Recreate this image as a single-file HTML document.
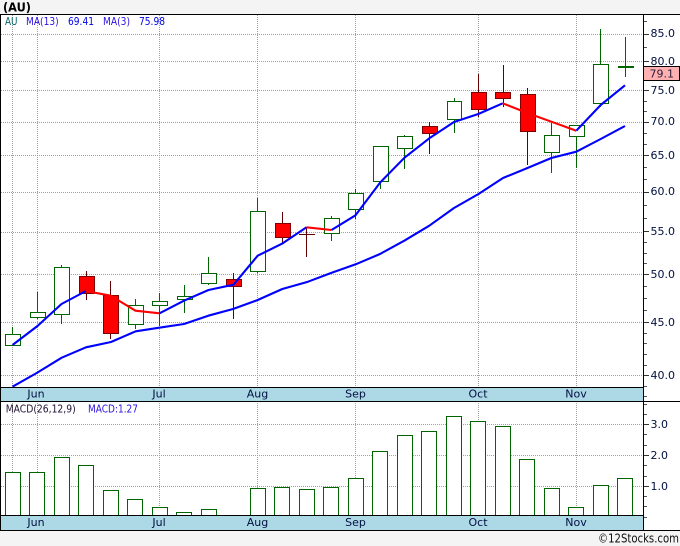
<!DOCTYPE html>
<html><head><meta charset="utf-8"><style>
html,body{margin:0;padding:0;background:#f4f4f4;width:680px;height:546px;overflow:hidden}
svg{display:block}
text{font-family:"DejaVu Sans","Liberation Sans",sans-serif;font-size:11px;fill:#001040}
.l{font-size:10.5px}
.c{shape-rendering:crispEdges}
</style></head><body>
<svg width="680" height="546" viewBox="0 0 680 546">
<rect x="0" y="0" width="680" height="546" fill="#f4f4f4"/>
<rect x="0" y="14" width="680" height="516" fill="#fff"/>
<text x="3" y="11.5" textLength="28" lengthAdjust="spacingAndGlyphs" style="font-weight:bold;font-size:12.5px;fill:#000">(AU)</text>
<rect x="1" y="387" width="642" height="14" fill="#add8e6"/>
<rect x="1" y="515" width="642" height="15" fill="#add8e6"/>
<g class="c" stroke="#a0a0a0" stroke-dasharray="1 1" fill="none">
<path d="M1 34.5H643M1 61.5H643M1 90.5H643M1 122.5H643M1 155.5H643M1 192.5H643M1 232.5H643M1 274.5H643M1 322.5H643M1 375.5H643M1 424.5H643M1 455.5H643M1 486.5H643"/>
<path d="M12.5 15V530M37.5 15V530M159.5 15V530M257.5 15V530M355.5 15V530M478.5 15V530M576.5 15V530"/>
</g>
<rect x="1" y="387" width="642" height="14" fill="#add8e6"/>
<rect x="1" y="515" width="642" height="15" fill="#add8e6"/>
<g class="c">
<path fill="none" stroke="#006400" d="M12.5 327V335M37.5 292V313M37.5 317V319M61.5 265V268M61.5 314V324M135.5 299V306M135.5 324V329M159.5 293V302M159.5 305V326M184.5 285V297M184.5 299V313M208.5 257V274M208.5 283V285M257.5 198V212M257.5 271V273M331.5 216V219M331.5 233V241M355.5 189V194M355.5 209V219M380.5 181V189M404.5 135V137M404.5 148V169M454.5 98V102M454.5 119V133M551.5 123V136M551.5 152V173M576.5 125V126M576.5 136V168M600.5 29V65M600.5 103V107M625.5 37V77"/>
<path fill="none" stroke="#600000" d="M86.5 271V277M86.5 293V300M110.5 281V296M110.5 333V339M233.5 273V280M233.5 286V319M282.5 212V224M282.5 237V244M306.5 228V257M429.5 122V127M429.5 133V154M478.5 74V93M478.5 109V117M503.5 65V93M503.5 98V107M527.5 88V95M527.5 131V165"/>
<path fill="none" stroke="#600000" d="M299 234.5H315"/>
<path fill="none" stroke="#006400" stroke-width="2" d="M618 67H634"/>
<g fill="#fff" stroke="#006400">
<rect x="5.5" y="334.5" width="15" height="11"/>
<rect x="30.5" y="312.5" width="15" height="5"/>
<rect x="54.5" y="267.5" width="15" height="47"/>
<rect x="128.5" y="305.5" width="15" height="19"/>
<rect x="152.5" y="301.5" width="15" height="4"/>
<rect x="177.5" y="296.5" width="15" height="3"/>
<rect x="201.5" y="273.5" width="15" height="10"/>
<rect x="250.5" y="211.5" width="15" height="60"/>
<rect x="324.5" y="218.5" width="15" height="15"/>
<rect x="348.5" y="193.5" width="15" height="16"/>
<rect x="373.5" y="146.5" width="15" height="35"/>
<rect x="397.5" y="136.5" width="15" height="12"/>
<rect x="447.5" y="101.5" width="14" height="18"/>
<rect x="544.5" y="135.5" width="15" height="17"/>
<rect x="569.5" y="125.5" width="15" height="11"/>
<rect x="593.5" y="64.5" width="15" height="39"/>
</g>
<g fill="#ff0000" stroke="#800000">
<rect x="79.5" y="276.5" width="15" height="17"/>
<rect x="103.5" y="295.5" width="15" height="38"/>
<rect x="226.5" y="279.5" width="15" height="7"/>
<rect x="275.5" y="223.5" width="15" height="14"/>
<rect x="422.5" y="126.5" width="15" height="7"/>
<rect x="471.5" y="92.5" width="15" height="17"/>
<rect x="495.5" y="92.5" width="15" height="6"/>
<rect x="520.5" y="94.5" width="15" height="37"/>
</g>
<g fill="#fff" stroke="#006400">
<rect x="5.5" y="472.5" width="15" height="43"/>
<rect x="29.5" y="472.5" width="15" height="43"/>
<rect x="54.5" y="457.5" width="15" height="58"/>
<rect x="78.5" y="465.5" width="15" height="50"/>
<rect x="103.5" y="490.5" width="15" height="25"/>
<rect x="127.5" y="499.5" width="15" height="16"/>
<rect x="152.5" y="507.5" width="15" height="8"/>
<rect x="176.5" y="512.5" width="15" height="3"/>
<rect x="201.5" y="509.5" width="15" height="6"/>
<rect x="250.5" y="488.5" width="15" height="27"/>
<rect x="274.5" y="487.5" width="15" height="28"/>
<rect x="299.5" y="489.5" width="15" height="26"/>
<rect x="323.5" y="487.5" width="15" height="28"/>
<rect x="348.5" y="478.5" width="15" height="37"/>
<rect x="372.5" y="451.5" width="15" height="64"/>
<rect x="397.5" y="435.5" width="15" height="80"/>
<rect x="421.5" y="431.5" width="15" height="84"/>
<rect x="446.5" y="416.5" width="15" height="99"/>
<rect x="470.5" y="421.5" width="15" height="94"/>
<rect x="495.5" y="426.5" width="15" height="89"/>
<rect x="519.5" y="459.5" width="15" height="56"/>
<rect x="544.5" y="488.5" width="15" height="27"/>
<rect x="568.5" y="507.5" width="15" height="8"/>
<rect x="593.5" y="485.5" width="15" height="30"/>
<rect x="617.5" y="478.5" width="15" height="37"/>
</g>
</g>
<g fill="none" stroke-width="2.1" stroke-linejoin="round">
<path stroke="#0000ff" d="M12.5 386.7L36.7 373L61.7 357.7L86 347.3L111 342L135.7 331.3L159.3 327.7L184 324L208.3 315.7L233 309L257.7 300L282.3 289L308 281.7L331 273L355.7 264.3L380 254L404.3 240.7L429.3 225.7L454 208L478.5 194L503 178L527.5 168L551.3 158L576.3 151.7L600.7 139L625 126"/>
<path stroke="#0000ff" d="M12.5 345L37.5 326L61.5 304L86 291"/>
<path stroke="#ff0000" d="M86 291L110.5 295.7L135.5 310.7L159.5 313.3"/>
<path stroke="#0000ff" d="M159.5 313.3L184 300.7L208.5 290L233.5 284.7L257.7 255.7L282 243.7L306.5 227.3"/>
<path stroke="#ff0000" d="M306.5 227.3L331.5 230"/>
<path stroke="#0000ff" d="M331.5 230L355.5 215.3L380 182.7L404.5 157.7L429.3 138.3L454 122L478.3 114L502.7 103.3"/>
<path stroke="#ff0000" d="M502.7 103.3L527.3 113L551.3 121.7L576.3 130.7"/>
<path stroke="#0000ff" d="M576.3 130.7L600.7 105L625 85.3"/>
</g>
<g class="c" stroke="#000" fill="none">
<path d="M0 14.5H680M0 387.5H643M0 401.5H680M0 515.5H643M0 530.5H680"/>
<path d="M0.5 14V530M643.5 14V530"/>
<path d="M644 34.5H649M644 61.5H649M644 90.5H649M644 122.5H649M644 155.5H649M644 192.5H649M644 231.5H649M644 274.5H649M644 322.5H649M644 375.5H649M644 424.5H649M644 455.5H649M644 486.5H649" stroke="#333"/>
<path d="M644 21.5H647M644 47.5H647M644 101.5H647M644 111.5H647M644 133.5H647M644 144.5H647M644 167.5H647M644 179.5H647M644 205.5H647M644 218.5H647M644 242.5H647M644 253.5H647M644 263.5H647M644 286.5H647M644 298.5H647M644 310.5H647M644 333.5H647M644 343.5H647M644 354.5H647M644 365.5H647M644 386.5H647M644 396.5H647M644 404.5H647M644 414.5H647M644 434.5H647M644 445.5H647M644 465.5H647M644 476.5H647M644 496.5H647M644 506.5H647M644 517.5H647" stroke="#555"/>
</g>
<rect class="c" x="643.5" y="66.5" width="36" height="14" fill="#ffb0b0" stroke="#000"/>
<text x="649.5" y="77.5" style="fill:#302040">79.1</text>
<text x="650.5" y="37">85.0</text>
<text x="650.5" y="65">80.0</text>
<text x="650.5" y="94">75.0</text>
<text x="650.5" y="125">70.0</text>
<text x="650.5" y="159">65.0</text>
<text x="650.5" y="195">60.0</text>
<text x="650.5" y="235">55.0</text>
<text x="650.5" y="278">50.0</text>
<text x="650.5" y="326">45.0</text>
<text x="650.5" y="379">40.0</text>
<text x="650.5" y="428">3.0</text>
<text x="650.5" y="459">2.0</text>
<text x="650.5" y="490">1.0</text>
<text class="l" x="5" y="25" textLength="12.5" lengthAdjust="spacingAndGlyphs" style="fill:#006464">AU</text>
<text class="l" x="26" y="25" textLength="32.7" lengthAdjust="spacingAndGlyphs" style="fill:#2a10e0">MA(13)</text>
<text class="l" x="68" y="25" textLength="26" lengthAdjust="spacingAndGlyphs" style="fill:#0000e6">69.41</text>
<text class="l" x="103" y="25" textLength="27" lengthAdjust="spacingAndGlyphs" style="fill:#2a10e0">MA(3)</text>
<text class="l" x="139" y="25" textLength="26" lengthAdjust="spacingAndGlyphs" style="fill:#0000e6">75.98</text>
<text class="l" x="5.7" y="412.5" textLength="70" lengthAdjust="spacingAndGlyphs" style="fill:#201030">MACD(26,12,9)</text>
<text class="l" x="88" y="412.5" textLength="50" lengthAdjust="spacingAndGlyphs" style="fill:#2a10e0">MACD:1.27</text>
<g text-anchor="middle" style="fill:#001040">
<text x="36" y="397.5">Jun</text><text x="159" y="397.5">Jul</text><text x="257.5" y="397.5">Aug</text><text x="355.5" y="397.5">Sep</text><text x="478" y="397.5">Oct</text><text x="576" y="397.5">Nov</text>
<text x="36" y="526">Jun</text><text x="159" y="526">Jul</text><text x="257.5" y="526">Aug</text><text x="355.5" y="526">Sep</text><text x="478" y="526">Oct</text><text x="576" y="526">Nov</text>
</g>
<text x="598" y="542.5" textLength="81" lengthAdjust="spacingAndGlyphs" style="font-size:12px;fill:#111">©12Stocks.com</text>
</svg>
</body></html>
